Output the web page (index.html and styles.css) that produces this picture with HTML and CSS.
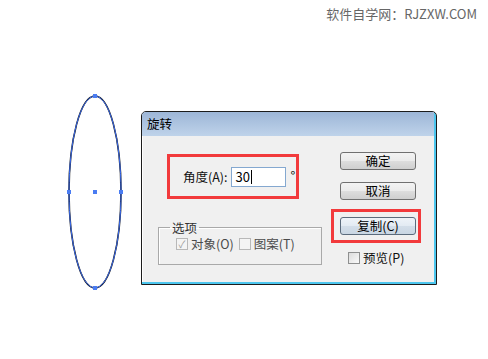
FILE: index.html
```html
<!DOCTYPE html>
<html lang="zh-CN">
<head>
  <meta charset="UTF-8" />
  <title>旋转</title>
  <link rel="stylesheet" href="styles.css">
</head>
<body>
  <div class="watermark">软件自学网：RJZXW.COM</div>

  <div class="stage">
    <svg class="shape" width="70" height="210" viewBox="0 0 70 210">
      <ellipse cx="35" cy="102" rx="26" ry="96" fill="none" stroke="#111" stroke-width="1.6" />
      <ellipse cx="35" cy="102" rx="26" ry="96" fill="none" stroke="#3b6cf0" stroke-width="1" />
      <rect x="33" y="4" width="4" height="4" fill="#4a7cf2" />
      <rect x="7" y="100" width="4" height="4" fill="#4a7cf2" />
      <rect x="59" y="100" width="4" height="4" fill="#4a7cf2" />
      <rect x="33" y="100" width="4" height="4" fill="#4a7cf2" />
      <rect x="33" y="196" width="4" height="4" fill="#4a7cf2" />
    </svg>

    <div class="dialog">
      <div class="titlebar">旋转</div>
      <div class="dlg-body">
        <div class="col-left">
          <div class="mark mark-angle">
            <span class="label">角度(A):</span>
            <span class="field">30<i class="caret"></i></span>
            <span class="deg">°</span>
          </div>
          <fieldset class="group">
            <legend>选项</legend>
            <span class="check disabled"><span class="box ticked">✓</span>对象(O)</span>
            <span class="check disabled"><span class="box"></span>图案(T)</span>
          </fieldset>
        </div>
        <div class="col-right">
          <button class="btn">确定</button>
          <button class="btn">取消</button>
          <div class="mark mark-copy">
            <button class="btn btn-hot">复制(C)</button>
          </div>
          <span class="check preview"><span class="box"></span>预览(P)</span>
        </div>
      </div>
    </div>
  </div>
</body>
</html>
```

FILE: styles.css
```css
    body {
      margin: 0;
      width: 488px;
      height: 359px;
      background: #fff;
      font-family: "Noto Sans CJK SC", "Noto Sans", sans-serif;
      font-size: 12px;
      color: #111;
      overflow: hidden;
    }

    .watermark {
      padding: 6px 11px 0 0;
      line-height: 16px;
      text-align: right;
      color: #666;
      font-size: 13px;
    }

    .stage {
      display: flex;
      align-items: flex-start;
      padding: 68px 0 0 60px;
    }

    .shape {
      display: block;
      flex: none;
    }

    .dialog {
      flex: none;
      width: 296px;
      height: 174px;
      box-sizing: border-box;
      margin: 21px 0 0 11px;
      border: 1px solid #1c1c1c;
      border-radius: 5px 5px 0 0;
      background: #f0f0f0;
      box-shadow: inset -2px -2px 0 #4cc6ee, inset 1px 0 0 #fff;
      overflow: hidden;
    }

    .titlebar {
      height: 24px;
      line-height: 24px;
      padding-left: 5px;
      margin-right: 2px;
      background: linear-gradient(#9db6d7, #bfd3ea);
      font-size: 12.5px;
      color: #000;
    }

    .dlg-body {
      display: flex;
      height: 147px;
    }

    .col-left {
      padding-left: 16px;
    }

    .mark {
      box-sizing: border-box;
      border: 3px solid #f23a3c;
    }

    .mark-angle {
      display: flex;
      align-items: center;
      width: 132px;
      height: 45px;
      margin: 18px 0 0 9px;
      padding-left: 13px;
      font-size: 12.5px;
    }

    .field {
      display: flex;
      align-items: center;
      box-sizing: border-box;
      width: 55px;
      height: 20px;
      margin-left: 3px;
      padding-left: 4px;
      border: 1px solid #84a8d0;
      background: #fff;
      font-size: 13px;
      color: #000;
    }

    .caret {
      width: 1px;
      height: 14px;
      margin-left: 1px;
      background: #000;
    }

    .deg {
      align-self: flex-start;
      margin: 9px 0 0 5px;
      font-size: 13px;
    }

    .group {
      box-sizing: border-box;
      width: 164px;
      height: 44px;
      margin: 22px 0 0 0;
      padding: 3px 0 0 17px;
      border: 1px solid #a9a9a9;
      box-shadow: 1px 1px 0 #fff inset;
      display: flex;
      align-items: flex-start;
    }

    .group legend {
      margin-left: -6px;
      padding: 0 2px;
      line-height: 13px;
      font-size: 12.5px;
      color: #333;
    }

    .check {
      display: inline-flex;
      align-items: center;
      line-height: 13px;
      font-size: 12.5px;
    }

    .check .box {
      box-sizing: border-box;
      width: 12px;
      height: 12px;
      margin-right: 3px;
      border: 1px solid #8e8f8f;
      background: linear-gradient(135deg, #dcdcdc, #fafafa);
      font-size: 10px;
      line-height: 10px;
      text-align: center;
      color: #9a9a9a;
    }

    .check.disabled {
      color: #4a4a4a;
    }

    .check.disabled .box {
      border-color: #b8b8b8;
      background: #f4f4f4;
    }

    .check.disabled + .check.disabled {
      margin-left: 5px;
    }

    .col-right {
      display: flex;
      flex-direction: column;
      align-items: flex-start;
      width: 90px;
      margin: 0 15px 0 auto;
    }

    .btn {
      box-sizing: border-box;
      width: 76px;
      height: 18px;
      margin: 12px 0 0 9px;
      padding: 0;
      border: 1px solid #707070;
      border-radius: 3px;
      background: linear-gradient(#f3f3f3 0%, #ebebeb 48%, #dddddd 52%, #cfcfcf 100%);
      font-family: inherit;
      font-size: 12.5px;
      line-height: 16px;
      color: #000;
    }

    .btn:first-child {
      margin-top: 16px;
    }

    .mark-copy {
      width: 90px;
      height: 34px;
      margin-top: 9px;
      padding: 5px 2px 5px 6px;
    }

    .mark-copy .btn {
      margin: 0;
    }

    .btn-hot {
      border-color: #5b6b7c;
      background: linear-gradient(#eef3f8 0%, #e3ebf3 48%, #d3dee9 52%, #c9d6e3 100%);
    }

    .preview {
      margin: 8px 0 0 17px;
    }
```
